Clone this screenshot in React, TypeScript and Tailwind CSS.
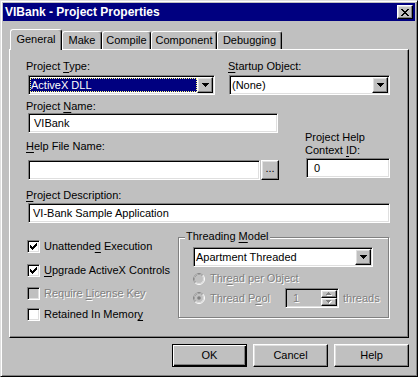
import React from "react";

const FONT = "font-['Liberation_Sans',Arial,sans-serif]";

const raised =
  "border border-t-white border-l-white border-r-black border-b-black shadow-[inset_-1px_-1px_0_#808080,inset_1px_1px_0_#dfdfdf]";
const sunken =
  "border border-t-[#808080] border-l-[#808080] border-r-white border-b-white shadow-[inset_1px_1px_0_#000,inset_-1px_-1px_0_#dfdfdf]";
const dim = "text-[#808080] [text-shadow:1px_1px_0_#fff]";

const CLOSE = ["XX....XX", ".XX..XX.", "..XXXX..", "...XX...", "..XXXX..", ".XX..XX.", "XX....XX"];
const CHECK = ["......X", ".....XX", "X...XXX", "XX.XXX.", "XXXXX..", ".XXX...", "..X...."];
const DOWN = ["XXXXXXX", ".XXXXX.", "..XXX..", "...X..."];
const SPIN_UP = ["..X..", ".XXX.", "XXXXX"];
const SPIN_DOWN = ["XXXXX", ".XXX.", "..X.."];

const Pixels = ({ rows, color, shadow }: { rows: string[]; color: string; shadow?: string }) => (
  <svg width={rows[0].length + (shadow ? 1 : 0)} height={rows.length + (shadow ? 1 : 0)} shapeRendering="crispEdges">
    {shadow &&
      rows.flatMap((r, y) =>
        r.split("").map((c, x) =>
          c === "X" ? <rect key={`s${x}-${y}`} x={x + 1} y={y + 1} width={1} height={1} fill={shadow} /> : null
        )
      )}
    {rows.flatMap((r, y) =>
      r.split("").map((c, x) =>
        c === "X" ? <rect key={`${x}-${y}`} x={x} y={y} width={1} height={1} fill={color} /> : null
      )
    )}
  </svg>
);

const Key = ({ children }: { children: React.ReactNode }) => (
  <span className="underline decoration-1 underline-offset-[2px]">{children}</span>
);

const Label = ({ children, className = "" }: { children: React.ReactNode; className?: string }) => (
  <div className={`h-[13px] whitespace-nowrap ${className}`}>{children}</div>
);

const DropButton = () => (
  <div className={`${raised} w-[16px] h-[16px] bg-[#c0c0c0] flex items-center justify-center shrink-0`}>
    <Pixels rows={DOWN} color="#000" />
  </div>
);

const Combo = ({ className, children, selected }: { className: string; children: React.ReactNode; selected?: boolean }) => (
  <div className={`${sunken} ${className} h-[20px] bg-white flex p-[1px]`}>
    {selected ? (
      <div className="flex-1 my-[1px] bg-[#000080] text-white border border-dotted border-[#ffff80] flex items-center">
        {children}
      </div>
    ) : (
      <div className="flex-1 flex items-center pl-[1px]">{children}</div>
    )}
    <DropButton />
  </div>
);

const Field = ({ className, children }: { className: string; children?: React.ReactNode }) => (
  <div className={`${sunken} ${className} h-[20px] bg-white flex items-center`}>{children}</div>
);

const CheckBox = ({ checked, disabled }: { checked?: boolean; disabled?: boolean }) => (
  <div
    className={`${sunken} w-[13px] h-[13px] shrink-0 flex items-center justify-center ${
      disabled ? "bg-[#c0c0c0]" : "bg-white"
    }`}
  >
    {checked && <Pixels rows={CHECK} color="#000" />}
  </div>
);

const Radio = ({ dot }: { dot?: boolean }) => (
  <svg width="12" height="12" className="shrink-0">
    <circle cx="6" cy="6" r="5.5" fill="#c0c0c0" stroke="#fff" />
    <path d="M2.11 9.89 A5.5 5.5 0 0 1 9.89 2.11" fill="none" stroke="#808080" />
    <circle cx="6" cy="6" r="4.5" fill="none" stroke="#dfdfdf" />
    <path d="M2.82 9.18 A4.5 4.5 0 0 1 9.18 2.82" fill="none" stroke="#a0a0a0" />
    {dot && <circle cx="6" cy="6" r="1.8" fill="#808080" />}
  </svg>
);

const CheckRow = ({
  checked,
  disabled,
  className,
  children,
}: {
  checked?: boolean;
  disabled?: boolean;
  className: string;
  children: React.ReactNode;
}) => (
  <div className={`flex items-center gap-[4px] h-[13px] -ml-[1px] ${className}`}>
    <CheckBox checked={checked} disabled={disabled} />
    <span className={`whitespace-nowrap ${disabled ? dim : ""}`}>{children}</span>
  </div>
);

const tabs = [
  { label: "General", w: "w-[52px]", active: true },
  { label: "Make", w: "w-[40px]" },
  { label: "Compile", w: "w-[49px]" },
  { label: "Component", w: "w-[66px]" },
  { label: "Debugging", w: "w-[65px]" },
];

const DialogButton = ({ children, isDefault }: { children: React.ReactNode; isDefault?: boolean }) => (
  <button
    type="button"
    className={`w-[75px] h-[23px] flex items-center justify-center bg-[#c0c0c0] ${
      isDefault
        ? "border border-black shadow-[inset_1px_1px_0_#fff,inset_-1px_-1px_0_#000,inset_-2px_-2px_0_#808080]"
        : raised
    }`}
  >
    {children}
  </button>
);

export default function App() {
  return (
    <div
      className={`${FONT} text-[11px] leading-[13px] text-black w-[418px] h-[377px] bg-[#c0c0c0] border border-t-[#dfdfdf] border-l-[#dfdfdf] border-r-black border-b-black shadow-[inset_1px_1px_0_#fff,inset_-1px_-1px_0_#808080] p-[2px] select-none`}
    >
      <div className="h-[18px] bg-[#000080] flex items-center justify-between pl-[2px] pr-[2px]">
        <span className="text-white font-bold text-[12px]">VIBank - Project Properties</span>
        <button type="button" className={`${raised} w-[16px] h-[14px] bg-[#c0c0c0] flex items-center justify-center`}>
          <Pixels rows={CLOSE} color="#000" />
        </button>
      </div>

      <div className="px-[6px] pt-[8px]">
        <div className="flex items-end pl-[1px]">
          {tabs.map((t) => (
            <div
              key={t.label}
              className={`${t.w} text-center border-t border-l border-r border-t-white border-l-white border-r-black rounded-t-[3px] shadow-[inset_-1px_0_0_#808080] ${
                t.active ? "relative z-10 -mb-[1px] h-[21px] pt-[3px] bg-[#c0c0c0]" : "h-[18px] pt-[2px]"
              }`}
            >
              {t.label}
            </div>
          ))}
        </div>

        <div className="h-[289px] border border-t-white border-l-white border-r-black border-b-black shadow-[inset_-1px_-1px_0_#808080]">
          <div className="pl-[18px] pt-[10px]">
            <div className="flex">
              <div className="w-[187px]">
                <Label className="-ml-[2px]">
                  Project <Key>T</Key>ype:
                </Label>
                <Combo className="mt-[2px] w-[187px]" selected>
                  ActiveX DLL
                </Combo>
              </div>
              <div className="ml-[14px]">
                <Label className="-ml-[1px]">
                  <Key>S</Key>tartup Object:
                </Label>
                <Combo className="mt-[2px] w-[161px]">(None)</Combo>
              </div>
            </div>

            <div className="flex mt-[5px]">
              <div className="w-[252px]">
                <Label className="-ml-[2px]">
                  Project <Key>N</Key>ame:
                </Label>
                <Field className="w-[250px] pl-[5px]">VIBank</Field>
                <Label className="-ml-[2px] mt-[7px]">
                  <Key>H</Key>elp File Name:
                </Label>
                <div className="flex mt-[7px]">
                  <Field className="w-[232px]" />
                  <button
                    type="button"
                    className={`${raised} ml-[1px] w-[18px] h-[20px] bg-[#c0c0c0] flex items-end justify-center pb-[4px]`}
                  >
                    ...
                  </button>
                </div>
              </div>
              <div className="ml-[26px] pt-[31px]">
                <div className="-ml-[1px] whitespace-nowrap">
                  Project Help
                  <br />
                  Context <Key>I</Key>D:
                </div>
                <Field className="mt-[1px] w-[84px] pl-[7px]">0</Field>
              </div>
            </div>

            <Label className="-ml-[2px] mt-[9px]">
              <Key>P</Key>roject Description:
            </Label>
            <Field className="mt-[1px] w-[362px] pl-[4px]">VI-Bank Sample Application</Field>

            <div className="flex">
              <div className="w-[150px] pt-[17px]">
                <CheckRow checked className="">
                  Unattende<Key>d</Key> Execution
                </CheckRow>
                <CheckRow checked className="mt-[11px]">
                  <Key>U</Key>pgrade ActiveX Controls
                </CheckRow>
                <CheckRow disabled className="mt-[10px]">
                  Require <Key>L</Key>icense Key
                </CheckRow>
                <CheckRow className="mt-[8px]">
                  Retained In Memor<Key>y</Key>
                </CheckRow>
              </div>

              <div className="relative mt-[14px] w-[211px] h-[81px] border border-[#808080] shadow-[inset_1px_1px_0_#fff,1px_1px_0_#fff] pl-[14px] pt-[9px]">
                <div className="absolute left-[6px] -top-[8px] px-[1px] bg-[#c0c0c0] whitespace-nowrap">
                  Threading <Key>M</Key>odel
                </div>
                <Combo className="w-[180px]">Apartment Threaded</Combo>
                <div className="flex items-center h-[13px] mt-[5px]">
                  <Radio />
                  <span className={`ml-[5px] whitespace-nowrap ${dim}`}>
                    Thr<Key>e</Key>ad per Object
                  </span>
                </div>
                <div className="flex items-center h-[20px] mt-[3px]">
                  <div className="w-[92px] flex items-center">
                    <Radio dot />
                    <span className={`ml-[5px] whitespace-nowrap ${dim}`}>
                      Thread P<Key>o</Key>ol
                    </span>
                  </div>
                  <div className={`${sunken} w-[54px] h-[20px] bg-[#c0c0c0] flex p-[1px]`}>
                    <div className={`flex-1 flex items-center pl-[6px] ${dim}`}>1</div>
                    <div className="w-[16px] flex flex-col">
                      <div className={`${raised} h-[8px] flex items-center justify-center`}>
                        <Pixels rows={SPIN_UP} color="#808080" shadow="#fff" />
                      </div>
                      <div className={`${raised} h-[8px] flex items-center justify-center`}>
                        <Pixels rows={SPIN_DOWN} color="#808080" shadow="#fff" />
                      </div>
                    </div>
                  </div>
                  <span className={`ml-[4px] ${dim}`}>threads</span>
                </div>
              </div>
            </div>
          </div>
        </div>

        <div className="flex justify-end gap-[6px] mt-[6px]">
          <DialogButton isDefault>OK</DialogButton>
          <DialogButton>Cancel</DialogButton>
          <DialogButton>Help</DialogButton>
        </div>
      </div>
    </div>
  );
}
